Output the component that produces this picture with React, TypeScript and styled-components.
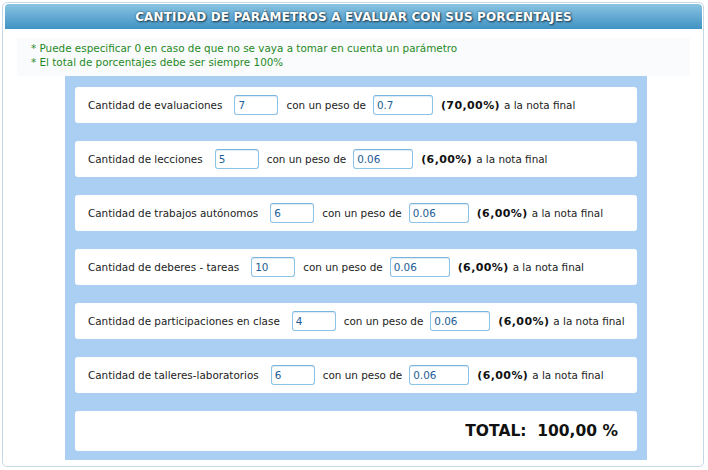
import styled, { createGlobalStyle } from "styled-components";

type Param = {
  label: string;
  count: string;
  weight: string;
  percent: string;
};

const params: Param[] = [
  { label: "Cantidad de evaluaciones", count: "7", weight: "0.7", percent: "70,00%" },
  { label: "Cantidad de lecciones", count: "5", weight: "0.06", percent: "6,00%" },
  { label: "Cantidad de trabajos autónomos", count: "6", weight: "0.06", percent: "6,00%" },
  { label: "Cantidad de deberes - tareas", count: "10", weight: "0.06", percent: "6,00%" },
  { label: "Cantidad de participaciones en clase", count: "4", weight: "0.06", percent: "6,00%" },
  { label: "Cantidad de talleres-laboratorios", count: "6", weight: "0.06", percent: "6,00%" },
];

const GlobalStyle = createGlobalStyle`
  body {
    margin: 0;
    background: #ffffff;
    font-family: "DejaVu Sans", Verdana, sans-serif;
  }
`;

const Frame = styled.div`
  margin: 2px;
  width: 702px;
  box-sizing: border-box;
  border: 1px solid #c6d8e6;
  border-radius: 5px;
  padding: 1px 1px 6px 2px;
`;

const Header = styled.div`
  height: 25px;
  display: flex;
  align-items: center;
  justify-content: center;
  border-radius: 4px 4px 0 0;
  background: linear-gradient(to bottom, #8ac4e1 0%, #68add5 45%, #3f93c3 100%);
  color: #ffffff;
  font-weight: bold;
  font-size: 12px;
  letter-spacing: 0.15px;
  text-shadow: 1px 1px 2px #1c3d52, 0 0 2px #2a4f66;
`;

const Notes = styled.div`
  margin: 9px 12px 0 12px;
  padding: 3px 14px 7px 14px;
  background: #fafbfc;
  color: #1f8a1f;
  font-size: 10.4px;
  line-height: 14px;
`;

const Panel = styled.div`
  margin-left: 60px;
  width: 582px;
  box-sizing: border-box;
  background: #aacff3;
  padding: 11px 10px 9px 10px;
  display: flex;
  flex-direction: column;
  gap: 18px;
`;

const Card = styled.div`
  height: 36px;
  box-sizing: border-box;
  background: #ffffff;
  border-radius: 3px;
  padding-left: 13px;
  display: flex;
  align-items: center;
  color: #222222;
  font-size: 10.4px;
  white-space: nowrap;
`;

const TotalCard = styled(Card)`
  height: 40px;
  justify-content: flex-end;
  padding-right: 19px;
  color: #111111;
  font-size: 15.5px;
  font-weight: bold;
  white-space: pre;
`;

const Label = styled.span`
  margin-right: 12px;
`;

const Connector = styled.span`
  margin-right: 7px;
`;

const Field = styled.input<{ $wide?: boolean }>`
  width: ${(p) => (p.$wide ? "60px" : "44px")};
  height: 20px;
  box-sizing: border-box;
  margin: 0 8px 0 0;
  padding: 0 3px;
  border: 1px solid #8dc3e7;
  border-top-color: #79b4dd;
  border-radius: 3px;
  box-shadow: inset 0 1px 1px rgba(120, 170, 210, 0.25);
  color: #1d5e96;
  font-family: "DejaVu Sans", Verdana, sans-serif;
  font-size: 10.4px;
  outline: none;
`;

const Percent = styled.b`
  color: #111111;
  font-size: 11px;
  letter-spacing: 0.4px;
  margin-right: 4px;
`;

const App = () => {
  return (
    <>
      <GlobalStyle />
      <Frame>
        <Header>CANTIDAD DE PARÁMETROS A EVALUAR CON SUS PORCENTAJES</Header>
        <Notes>
          * Puede especificar 0 en caso de que no se vaya a tomar en cuenta un parámetro
          <br />* El total de porcentajes debe ser siempre 100%
        </Notes>
        <Panel>
          {params.map((p) => (
            <Card key={p.label}>
              <Label>{p.label}</Label>
              <Field defaultValue={p.count} />
              <Connector>con un peso de</Connector>
              <Field $wide defaultValue={p.weight} />
              <Percent>({p.percent})</Percent>
              a la nota final
            </Card>
          ))}
          <TotalCard>TOTAL:  100,00 %</TotalCard>
        </Panel>
      </Frame>
    </>
  );
};

export default App;
